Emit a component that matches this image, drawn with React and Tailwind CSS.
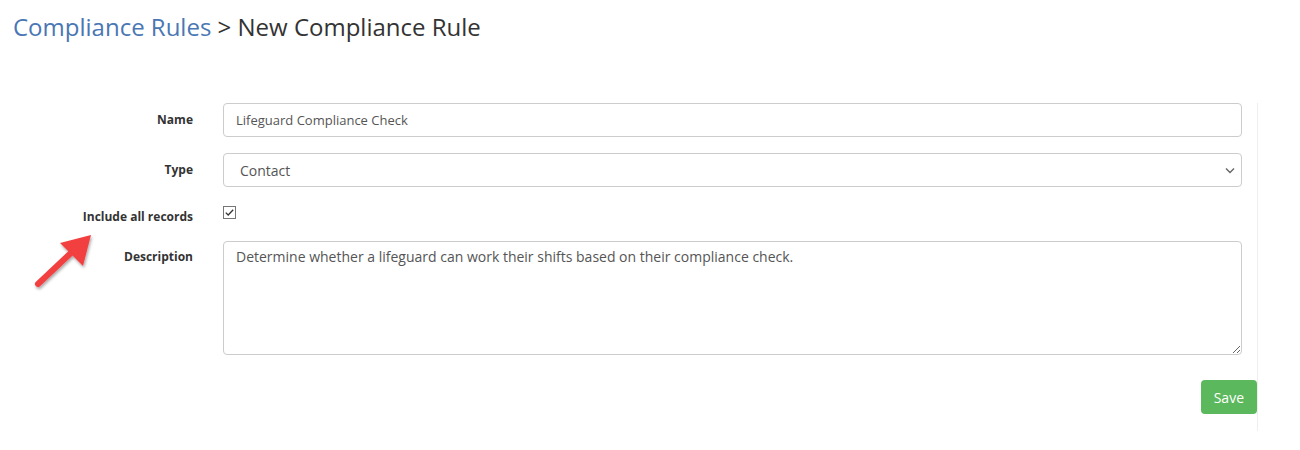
import React from 'react';

function Arrow() {
  return (
    <svg className="absolute left-[28px] top-[228px]" width="72" height="68" viewBox="0 0 72 68">
      <defs>
        <filter id="sh" x="-30%" y="-30%" width="160%" height="160%">
          <feDropShadow dx="1" dy="2" stdDeviation="1.5" floodColor="#000" floodOpacity="0.35" />
        </filter>
      </defs>
      <g filter="url(#sh)">
        <line x1="10" y1="56" x2="45" y2="23" stroke="#f24141" strokeWidth="6" strokeLinecap="round" />
        <polygon points="63,7 32,15 55,38" fill="#f24141" />
      </g>
    </svg>
  );
}

function Row({ label, children, top = 'pt-[8px]' }) {
  return (
    <div className="flex">
      <label className={`w-[193px] shrink-0 text-right text-[12px] font-bold text-[#333] ${top}`}>{label}</label>
      <div className="ml-[30px] flex-1">{children}</div>
    </div>
  );
}

export default function App() {
  return (
    <div className="relative min-h-screen bg-white font-['Open_Sans',sans-serif] text-[#333]">
      <h1 className="pl-[13px] pt-[11px] text-[24px] leading-[32px]">
        <a className="text-[#4a77b4]">Compliance Rules</a>
        <span className="text-[#333]"> &gt; New Compliance Rule</span>
      </h1>

      <div className="mt-[60px] flex">
        <div className="w-[1258px] space-y-[16px] border-r border-[#eee] pb-[17px] pr-[15px]">
          <Row label="Name">
            <input
              defaultValue="Lifeguard Compliance Check"
              className="h-[34px] w-full rounded-[4px] border border-[#ccc] px-[12px] text-[13px] text-[#555] outline-none"
            />
          </Row>
          <Row label="Type">
            <div className="relative">
              <select className="h-[34px] w-full appearance-none rounded-[4px] border border-[#ccc] bg-white px-[16px] text-[14px] text-[#555] outline-none">
                <option>Contact</option>
              </select>
              <svg className="pointer-events-none absolute right-[7px] top-[14px]" width="10" height="7" viewBox="0 0 10 7">
                <path d="M1 1.5 L5 5.5 L9 1.5" fill="none" stroke="#666" strokeWidth="1.4" />
              </svg>
            </div>
          </Row>
          <Row label="Include all records" top="pt-[6px] leading-[16px]">
            <div className="flex h-[20px] items-start pt-[3px]">
              <span className="flex h-[13px] w-[13px] items-center justify-center border border-[#767676] bg-white">
                <svg width="9" height="7" viewBox="0 0 9 7">
                  <path d="M0.8 3.6 L3.2 6 L8.2 0.8" fill="none" stroke="#333" strokeWidth="1.3" />
                </svg>
              </span>
            </div>
          </Row>
          <Row label="Description" top="pt-[7px]">
            <textarea
              defaultValue="Determine whether a lifeguard can work their shifts based on their compliance check."
              className="block h-[114px] w-full resize-y rounded-[4px] border border-[#ccc] px-[12px] py-[4px] text-[14px] text-[#555] outline-none"
            />
          </Row>
          <div className="flex justify-end pt-[9px]">
            <button className="-mr-[15px] h-[34px] rounded-[4px] bg-[#5cb85c] px-[13px] text-[14px] text-white">Save</button>
          </div>
        </div>
      </div>

      <Arrow />
    </div>
  );
}
